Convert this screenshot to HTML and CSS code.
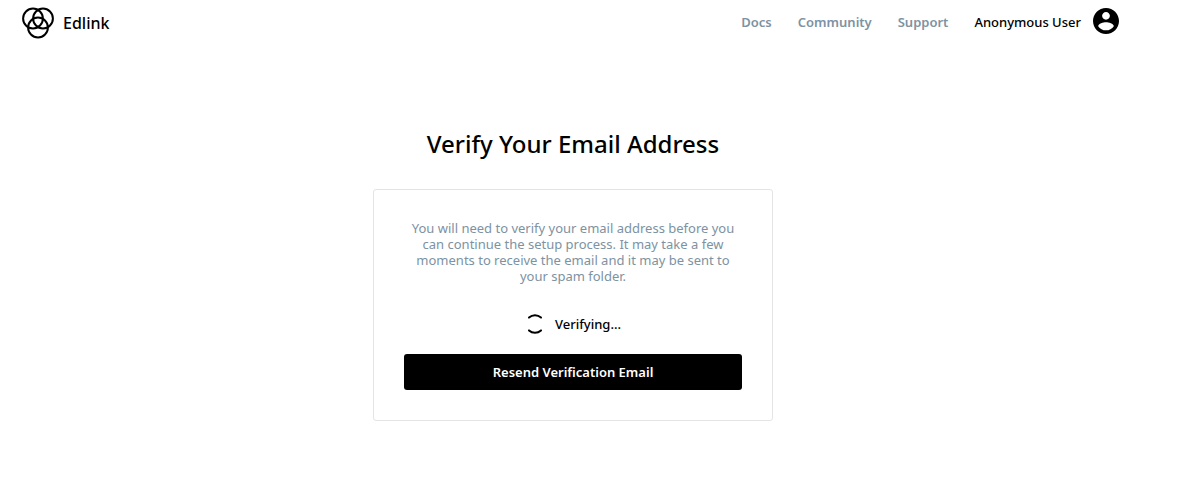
FILE: index.html
```html
<!DOCTYPE html>
<html lang="en">
<head>
<meta charset="utf-8">
<meta name="viewport" content="width=device-width, initial-scale=1">
<title>Verify Your Email Address - Edlink</title>
<link rel="stylesheet" href="styles.css">
</head>
<body>
<header class="header">
  <a class="brand" href="#">
    <svg class="brand-logo" viewBox="0 0 32 32" aria-hidden="true">
      <g fill="none" stroke="currentColor" stroke-width="2">
        <circle cx="11" cy="11.500" r="9.900"/>
        <circle cx="21" cy="11.500" r="9.900"/>
        <circle cx="16" cy="20.500" r="9.900"/>
      </g>
    </svg>
    <span>Edlink</span>
  </a>
  <nav class="nav">
    <a class="nav-link" href="#">Docs</a>
    <a class="nav-link" href="#">Community</a>
    <a class="nav-link" href="#">Support</a>
    <a class="user" href="#">
      <span class="user-name">Anonymous User</span>
      <svg class="avatar" viewBox="2 2 20 20" aria-hidden="true">
        <path fill="currentColor" d="M12 2C6.480 2 2 6.480 2 12s4.480 10 10 10 10-4.480 10-10S17.520 2 12 2zm0 3c1.660 0 3 1.340 3 3s-1.340 3-3 3-3-1.340-3-3 1.340-3 3-3zm0 14.200c-2.500 0-4.710-1.280-6-3.220.030-1.990 4-3.080 6-3.080 1.990 0 5.970 1.090 6 3.080-1.290 1.940-3.500 3.220-6 3.220z"/>
      </svg>
    </a>
  </nav>
</header>
<main class="main">
  <h1 class="title">Verify Your Email Address</h1>
  <section class="card">
    <p class="message">You will need to verify your email address before you can continue the setup process. It may take a few moments to receive the email and it may be sent to your spam folder.</p>
    <div class="status" role="status">
      <svg class="spinner" viewBox="0 0 20 20" aria-hidden="true">
        <path d="M4 3.600A9 9 0 0 1 16 3.600M4 16.400A9 9 0 0 0 16 16.400" fill="none" stroke="currentColor" stroke-width="2" stroke-linecap="round"/>
      </svg>
      <span>Verifying...</span>
    </div>
    <button class="button" type="button">Resend Verification Email</button>
  </section>
</main>
</body>
</html>
```
FILE: styles.css
```css
* {
  box-sizing: border-box;
}

body {
  margin: 0;
  padding-right: 50px;
  background: #fff;
  color: #000;
  font-family: "Segoe UI", "Noto Sans", sans-serif;
  font-size: 13px;
  line-height: 16px;
}

a {
  color: inherit;
  text-decoration: none;
}

.header {
  display: flex;
  align-items: flex-start;
  justify-content: space-between;
  padding: 7px 27px 7px 22px;
}

.brand {
  display: flex;
  align-items: center;
  gap: 9px;
  font-size: 16px;
  font-weight: 500;
  line-height: 24px;
}

.brand-logo {
  width: 32px;
  height: 32px;
}

.nav {
  display: flex;
  align-items: center;
  gap: 26px;
  padding-top: 1px;
  font-weight: 600;
}

.nav-link,
.user-name {
  padding-top: 2px;
}

.nav-link {
  color: #7d92a2;
}

.user {
  display: flex;
  align-items: center;
  gap: 12px;
  font-weight: 500;
}

.avatar {
  width: 26px;
  height: 26px;
}

.main {
  display: flex;
  flex-direction: column;
  align-items: center;
  padding: 80px 16px;
}

.title {
  margin: 0 0 28px;
  font-size: 24px;
  font-weight: 500;
  line-height: 35px;
  text-align: center;
}

.card {
  width: 100%;
  max-width: 400px;
  padding: 30px;
  border: 1px solid #e4e4e6;
  border-radius: 3px;
}

.message {
  margin: 0 0 30px;
  color: #7d92a2;
  text-align: center;
}

.status {
  display: flex;
  align-items: center;
  justify-content: center;
  gap: 10px;
  margin-bottom: 20px;
  font-weight: 500;
}

.spinner {
  width: 20px;
  height: 20px;
}

.button {
  display: block;
  width: 100%;
  padding: 10px;
  border: 0;
  border-radius: 3px;
  background: #000;
  color: #fff;
  font: inherit;
  font-weight: 600;
}
```
